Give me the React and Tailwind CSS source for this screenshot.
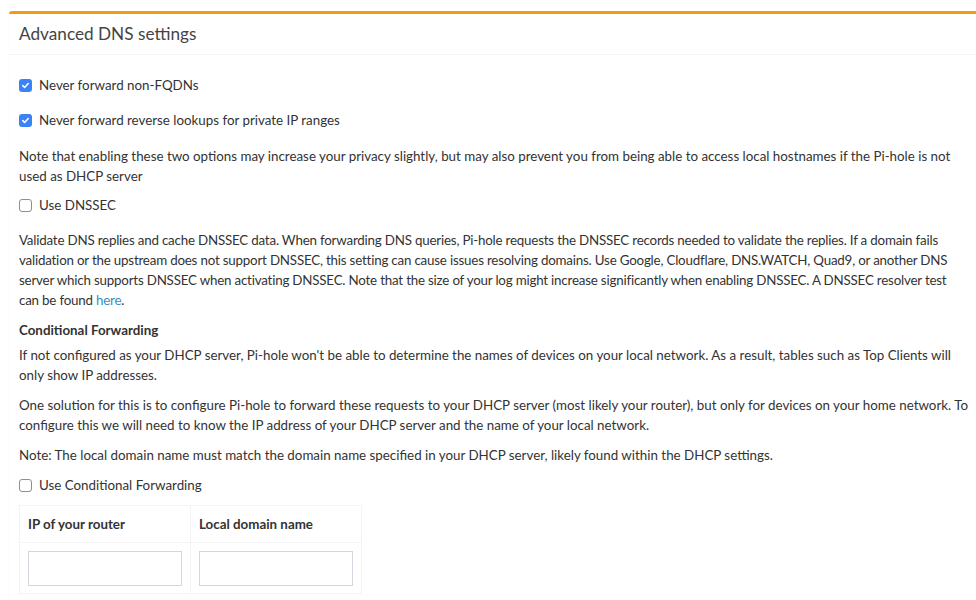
const font = { fontFamily: 'Lato, "Open Sans", sans-serif' };

function Check({ checked, label }) {
    return (
        <label className="flex items-center h-5 leading-5">
            {checked ? (
                <span className="w-[13px] h-[13px] rounded-[3px] bg-[#3a82f7] flex items-center justify-center shrink-0">
                    <svg width="9" height="9" viewBox="0 0 10 10" fill="none" stroke="#fff" strokeWidth="1.8" strokeLinecap="round" strokeLinejoin="round">
                        <path d="M2 5.2l2 2L8 2.8" />
                    </svg>
                </span>
            ) : (
                <span className="w-[13px] h-[13px] rounded-[3px] border border-[#8f8f8f] bg-white shrink-0" />
            )}
            <span className="ml-[7px]">{label}</span>
        </label>
    );
}

export default function App() {
    return (
        <div className="h-[600px] overflow-hidden bg-white pt-[11px] pl-[9px] text-[#333] text-[13.35px] leading-5" style={font}>
            <div className="bg-white border-t-[3px] border-[#f39c12] rounded-tl-[3px] shadow-[0_1px_1px_rgba(0,0,0,0.1)]">
                {/* Header */}
                <div className="h-[41px] px-[10px] flex items-center border-b border-[#f4f4f4]">
                    <h3 className="text-[17.2px] text-[#444] leading-5">Advanced DNS settings</h3>
                </div>

                {/* Body */}
                <div className="px-[10px] pt-[20px] pb-[40px]">
                    <Check checked label="Never forward non-FQDNs" />
                    <div className="mt-[15px]">
                        <Check checked label="Never forward reverse lookups for private IP ranges" />
                    </div>
                    <p className="mt-[16px] w-[952px]">
                        Note that enabling these two options may increase your privacy slightly, but may also prevent you from being able to access local hostnames if the Pi-hole is not used as DHCP server
                    </p>
                    <div className="mt-[9px]">
                        <Check label="Use DNSSEC" />
                    </div>
                    <p className="mt-[15px] w-[952px] tracking-[-0.2px]">
                        Validate DNS replies and cache DNSSEC data. When forwarding DNS queries, Pi-hole requests the DNSSEC records needed to validate the replies. If a domain fails validation or the upstream does not support DNSSEC, this setting can cause issues resolving domains. Use Google, Cloudflare, DNS.WATCH, Quad9, or another DNS server which supports DNSSEC when activating DNSSEC. Note that the size of your log might increase significantly when enabling DNSSEC. A DNSSEC resolver test<br />can be found <a className="text-[#3c8dbc]">here</a>.
                    </p>
                    <p className="mt-[10px] font-bold">Conditional Forwarding</p>
                    <p className="mt-[5px] w-[952px]">
                        If not configured as your DHCP server, Pi-hole won't be able to determine the names of devices on your local network. As a result, tables such as Top Clients will only show IP addresses.
                    </p>
                    <p className="mt-[10px] w-[952px]">
                        One solution for this is to configure Pi-hole to forward these requests to your DHCP server (most likely your router), but only for devices on your home network. To configure this we will need to know the IP address of your DHCP server and the name of your local network.
                    </p>
                    <p className="mt-[10px] w-[952px]">
                        Note: The local domain name must match the domain name specified in your DHCP server, likely found within the DHCP settings.
                    </p>
                    <div className="mt-[10px]">
                        <Check label="Use Conditional Forwarding" />
                    </div>

                    <table className="mt-[10px] border-collapse border border-[#f4f4f4] w-[343px]">
                        <thead>
                            <tr>
                                <th className="text-left font-bold border border-[#f4f4f4] px-[8px] h-[37px] w-[171px]">IP of your router</th>
                                <th className="text-left font-bold border border-[#f4f4f4] px-[8px] h-[37px]">Local domain name</th>
                            </tr>
                        </thead>
                        <tbody>
                            <tr>
                                <td className="border border-[#f4f4f4] px-[8px] pt-[8px] pb-[7px]">
                                    <input className="block w-full h-[35px] border border-[#d2d6de] bg-white outline-none" />
                                </td>
                                <td className="border border-[#f4f4f4] px-[8px] pt-[8px] pb-[7px]">
                                    <input className="block w-full h-[35px] border border-[#d2d6de] bg-white outline-none" />
                                </td>
                            </tr>
                        </tbody>
                    </table>
                </div>
            </div>
        </div>
    );
}
